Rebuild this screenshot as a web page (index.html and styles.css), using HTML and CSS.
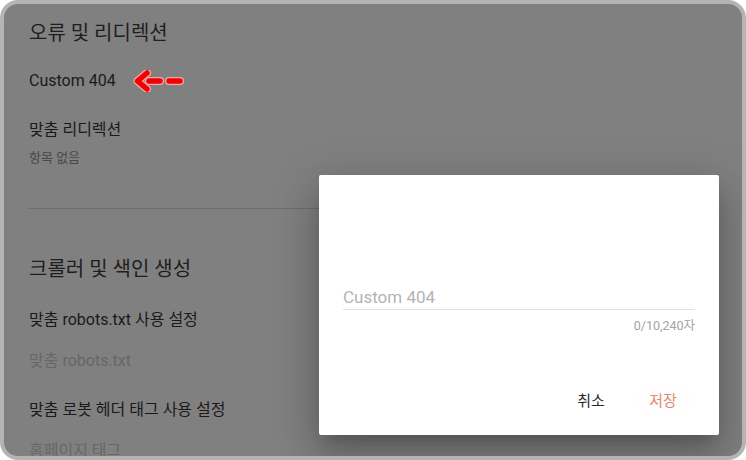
FILE: index.html
```html
<!DOCTYPE html>
<html lang="ko">
<head>
<meta charset="utf-8">
<title>설정</title>
<link rel="stylesheet" href="styles.css">
</head>
<body>
<div class="frame">
  <div class="content">
    <h2 class="heading">오류 및 리디렉션</h2>
    <div class="row custom">
      <span>Custom 404</span>
      <svg class="arrow" width="52" height="22" viewBox="0 0 52 22" aria-hidden="true">
        <g fill="none" stroke="#f1a7a7" stroke-width="8" stroke-linecap="round" stroke-linejoin="round">
          <path d="M14 3 L4.5 11 L14 19"/>
          <path d="M16 11 H27"/>
          <path d="M36 11 H47"/>
        </g>
        <g fill="none" stroke="#f40000" stroke-width="5.5" stroke-linecap="round" stroke-linejoin="round">
          <path d="M14 3 L4.5 11 L14 19"/>
          <path d="M16 11 H27"/>
          <path d="M36 11 H47"/>
        </g>
      </svg>
    </div>
    <div class="row item-title">맞춤 리디렉션</div>
    <div class="row sub">항목 없음</div>
    <hr class="divider">
    <h2 class="heading second">크롤러 및 색인 생성</h2>
    <div class="row item-title gap-a">맞춤 robots.txt 사용 설정</div>
    <div class="row disabled gap-b">맞춤 robots.txt</div>
    <div class="row item-title gap-c">맞춤 로봇 헤더 태그 사용 설정</div>
    <div class="row disabled gap-b">홈페이지 태그</div>
  </div>

  <div class="dialog">
    <div class="field">
      <span class="placeholder">Custom 404</span>
    </div>
    <div class="counter">0/10,240자</div>
    <div class="actions">
      <button class="btn cancel">취소</button>
      <button class="btn save">저장</button>
    </div>
  </div>
</div>
</body>
</html>
```

FILE: styles.css
```css
* { box-sizing: border-box; }

html, body {
  margin: 0;
  padding: 0;
  background: #ffffff;
}

body {
  font-family: Roboto, "Noto Sans CJK KR", "Noto Sans", sans-serif;
}

.frame {
  position: relative;
  width: 746px;
  height: 460px;
  border: 4px solid #b4b4b4;
  border-radius: 18px;
  background: #808080;
  overflow: hidden;
}

.content {
  padding: 17px 25px 0 25px;
}

.heading {
  margin: 0;
  font-weight: 400;
  font-size: 20px;
  line-height: 24px;
  color: #1e1e1e;
}

.heading.second {
  margin-top: 48px;
}

.row {
  font-size: 16px;
  line-height: 24px;
  color: #1a1a1a;
}

.custom {
  display: flex;
  align-items: center;
  margin-top: 24px;
}

.arrow {
  margin-left: 17px;
  display: block;
}

.item-title {
  margin-top: 25px;
}

.sub {
  margin-top: 6px;
  font-size: 13px;
  line-height: 20px;
  color: #484848;
}

.divider {
  margin: 40px 0 0 -1px;
  border: 0;
  height: 1px;
  background: #6e6e6e;
}

.gap-a { margin-top: 27px; }
.gap-b { margin-top: 17px; }
.gap-c { margin-top: 25px; }

.disabled {
  color: #676767;
}

.dialog {
  position: absolute;
  left: 315px;
  top: 171px;
  width: 400px;
  height: 260px;
  background: #ffffff;
  border-radius: 2px;
  padding: 110px 24px 18px 24px;
  display: flex;
  flex-direction: column;
  box-shadow: 0 11px 15px -7px rgba(0,0,0,0.2),
              0 24px 38px 3px rgba(0,0,0,0.14),
              0 9px 46px 8px rgba(0,0,0,0.12);
}

.field {
  height: 25px;
  border-bottom: 1px solid #e0e0e0;
  font-size: 17px;
  line-height: 24px;
}

.placeholder {
  color: #b3b3b3;
}

.counter {
  margin-top: 8px;
  text-align: right;
  font-size: 12.5px;
  line-height: 16px;
  color: #a3a3a3;
}

.actions {
  margin-top: auto;
  display: flex;
  justify-content: flex-end;
  gap: 8px;
}

.btn {
  min-width: 64px;
  height: 36px;
  border: 0;
  background: transparent;
  font-family: Roboto, "Noto Sans CJK KR", sans-serif;
  font-size: 15px;
  padding: 0 8px;
  border-radius: 4px;
}

.cancel {
  color: #2a2a2a;
}

.save {
  color: #dc8a72;
  background: radial-gradient(ellipse at center, rgba(230,140,110,0.035) 0%, rgba(230,140,110,0) 70%);
}
```
